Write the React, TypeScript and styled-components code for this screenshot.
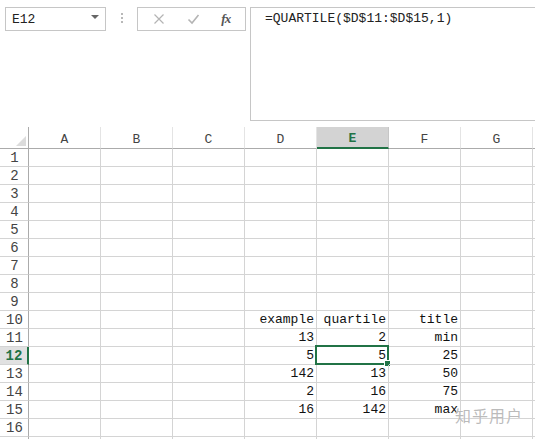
import styled, { createGlobalStyle } from "styled-components";

const GlobalStyle = createGlobalStyle`
  html, body {
    margin: 0;
    padding: 0;
    background: #ffffff;
  }
  body {
    font-family: "Liberation Mono", "DejaVu Sans Mono", monospace;
    font-size: 13px;
    color: #111;
    overflow: hidden;
  }
`;

const Page = styled.div`
  position: relative;
  width: 535px;
  height: 439px;
  overflow: hidden;
`;

const TopBar = styled.div`
  display: flex;
  align-items: flex-start;
  height: 127px;
  padding-top: 7px;
  box-sizing: border-box;
`;

const NameBox = styled.div`
  margin-left: 5px;
  width: 101px;
  height: 24px;
  box-sizing: border-box;
  border: 1px solid #c6c6c6;
  display: flex;
  align-items: center;
  justify-content: space-between;
  padding: 0 6px 0 6px;
  font-size: 13px;
  color: #222;
`;

const Caret = styled.span`
  width: 0;
  height: 0;
  border-left: 4px solid transparent;
  border-right: 4px solid transparent;
  border-top: 4px solid #666;
  margin-top: -4px;
`;

const Dots = styled.div`
  width: 31px;
  display: flex;
  flex-direction: column;
  align-items: center;
  gap: 2px;
  padding-top: 6px;

  span {
    width: 2px;
    height: 2px;
    background: #b8b8b8;
  }
`;

const ToolBox = styled.div`
  width: 109px;
  height: 24px;
  box-sizing: border-box;
  border: 1px solid #c6c6c6;
  display: flex;
  align-items: center;
  justify-content: space-around;
  padding: 0 4px;
`;

const Fx = styled.span`
  font-family: "Liberation Serif", serif;
  font-style: italic;
  font-weight: bold;
  font-size: 13px;
  color: #555;
  letter-spacing: -1px;
`;

const FormulaBox = styled.div`
  margin-left: 4px;
  flex: 1;
  height: 114px;
  box-sizing: border-box;
  border: 1px solid #c6c6c6;
  border-right: none;
  padding: 3px 0 0 14px;
  font-size: 13px;
  color: #222;
  line-height: 16px;
`;

const Grid = styled.div`
  display: grid;
  grid-template-columns: 29px repeat(7, 72px) 1fr;
  grid-template-rows: 22px;
  grid-auto-rows: 18px;
`;

const Corner = styled.div`
  box-sizing: border-box;
  border-right: 1px solid #ababab;
  border-bottom: 1px solid #ababab;
  position: relative;

  &::after {
    content: "";
    position: absolute;
    right: 2px;
    bottom: 2px;
    border-left: 10px solid transparent;
    border-bottom: 10px solid #dcdcdc;
  }
`;

const ColHead = styled.div<{ $active?: boolean }>`
  box-sizing: border-box;
  border-right: 1px solid ${(p) => (p.$active ? "#c6c6c6" : "#e4e4e4")};
  border-bottom: ${(p) => (p.$active ? "2px solid #217346" : "1px solid #ababab")};
  background: ${(p) => (p.$active ? "#d3d3d3" : "#ffffff")};
  color: ${(p) => (p.$active ? "#217346" : "#444")};
  font-weight: ${(p) => (p.$active ? "bold" : "normal")};
  display: flex;
  align-items: center;
  justify-content: center;
  padding-top: 3px;
  font-size: 13px;
`;

const RowHead = styled.div<{ $active?: boolean }>`
  box-sizing: border-box;
  border-bottom: 1px solid #d4d4d4;
  border-right: ${(p) => (p.$active ? "2px solid #217346" : "1px solid #ababab")};
  background: ${(p) => (p.$active ? "#e1e1e1" : "#ffffff")};
  color: ${(p) => (p.$active ? "#217346" : "#444")};
  font-weight: ${(p) => (p.$active ? "bold" : "normal")};
  display: flex;
  align-items: center;
  justify-content: center;
  padding-left: 1px;
  font-size: 14px;
`;

const Cell = styled.div`
  position: relative;
  box-sizing: border-box;
  border-right: 1px solid #d4d4d4;
  border-bottom: 1px solid #d4d4d4;
  display: flex;
  align-items: center;
  justify-content: flex-end;
  padding: 1px 2px 0 2px;
  font-size: 13px;
  line-height: 16px;
  white-space: nowrap;
`;

const Selection = styled.div`
  position: absolute;
  left: -2px;
  top: -2px;
  right: -1px;
  bottom: -1px;
  border: 2px solid #217346;
  pointer-events: none;

  &::after {
    content: "";
    position: absolute;
    right: -4px;
    bottom: -4px;
    width: 5px;
    height: 5px;
    background: #217346;
    border: 1px solid #fff;
  }
`;

const Watermark = styled.div`
  position: absolute;
  left: 455px;
  top: 403px;
  font-family: "Noto Sans CJK SC", sans-serif;
  font-size: 16px;
  letter-spacing: 1px;
  color: rgba(165, 165, 165, 0.75);
  text-shadow: 0 0 1px #fff;
`;

const columns = ["A", "B", "C", "D", "E", "F", "G", ""];

const data: Record<number, string[]> = {
  10: ["example", "quartile", "title"],
  11: ["13", "2", "min"],
  12: ["5", "5", "25"],
  13: ["142", "13", "50"],
  14: ["2", "16", "75"],
  15: ["16", "142", "max"],
};

const App = (): JSX.Element => {
  // 16 numbered rows, plus one empty row peeking in at the bottom edge
  const rows = Array.from({ length: 17 }, (_, i) => i + 1);
  return (
    <Page>
      <GlobalStyle />
      <TopBar>
        <NameBox>
          <span>E12</span>
          <Caret />
        </NameBox>
        <Dots>
          <span />
          <span />
          <span />
        </Dots>
        <ToolBox>
          <svg width="12" height="12" viewBox="0 0 12 12">
            <path d="M1.5 1.5 L10.5 10.5 M10.5 1.5 L1.5 10.5" stroke="#b4b4b4" strokeWidth="1.2" fill="none" />
          </svg>
          <svg width="13" height="12" viewBox="0 0 13 12">
            <path d="M1.5 6.5 L5 10 L11.5 2" stroke="#b4b4b4" strokeWidth="1.6" fill="none" />
          </svg>
          <Fx>fx</Fx>
        </ToolBox>
        <FormulaBox>=QUARTILE($D$11:$D$15,1)</FormulaBox>
      </TopBar>
      <Grid>
        <Corner />
        {columns.map((c) => (
          <ColHead key={c || "h"} $active={c === "E"}>
            {c}
          </ColHead>
        ))}
        {rows.map((r) => {
          const vals = data[r] || [];
          return [
            <RowHead key={`h${r}`} $active={r === 12}>
              {r <= 16 ? r : ""}
            </RowHead>,
            ...columns.map((c, ci) => {
              const v = ci >= 3 && ci <= 5 ? vals[ci - 3] : undefined;
              return (
                <Cell key={`${r}${c}${ci}`}>
                  {v}
                  {r === 12 && c === "E" && <Selection />}
                </Cell>
              );
            }),
          ];
        })}
      </Grid>
      <Watermark>知乎用户</Watermark>
    </Page>
  );
};

export default App;
